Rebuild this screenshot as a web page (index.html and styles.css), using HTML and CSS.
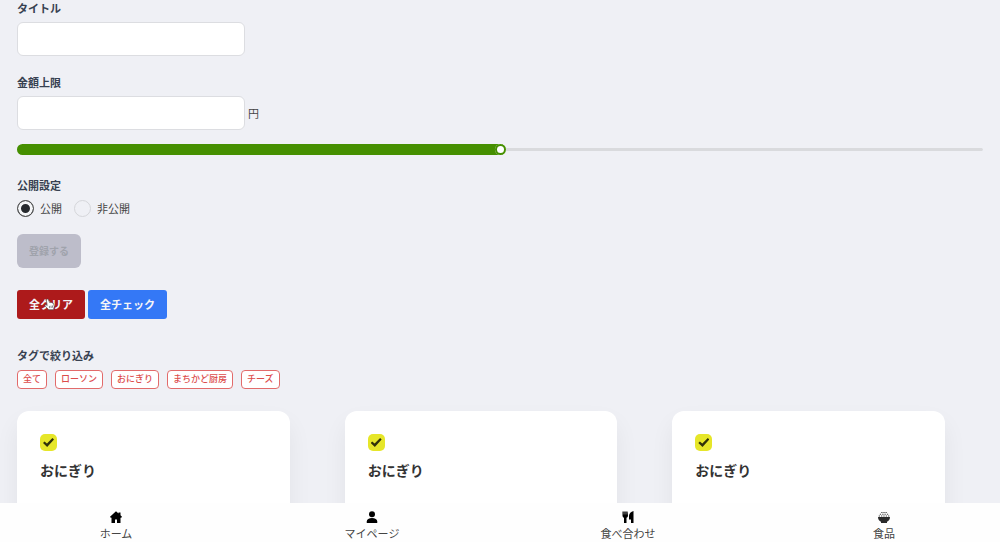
FILE: index.html
```html
<!DOCTYPE html>
<html lang="ja">
<head>
<meta charset="utf-8">
<meta name="viewport" content="width=device-width, initial-scale=1">
<title>食べ合わせ</title>
<link rel="stylesheet" href="styles.css">
</head>
<body>
<main class="page">
  <form class="form">
    <div class="field">
      <label class="label" for="title">タイトル</label>
      <input class="text-box" id="title" type="text">
    </div>
    <div class="field">
      <label class="label" for="limit">金額上限</label>
      <div class="amount">
        <input class="text-box" id="limit" type="text" inputmode="numeric">
        <span>円</span>
      </div>
    </div>
    <input class="range" type="range" min="0" max="100" value="50" aria-label="金額上限">
    <fieldset class="visibility">
      <legend class="label">公開設定</legend>
      <div class="options">
        <label class="option"><input class="radio" type="radio" name="visibility" checked>公開</label>
        <label class="option"><input class="radio" type="radio" name="visibility">非公開</label>
      </div>
    </fieldset>
    <button class="submit" type="submit" disabled>登録する</button>
  </form>

  <div class="actions">
    <button class="action action-clear" type="button">全クリア
      <svg class="pointer" viewBox="0 0 12 14" aria-hidden="true"><path d="M3.2 1.2c.8-.5 1.5 0 1.8.8l1 2.7c.6-.4 1.2-.2 1.5.3.6-.4 1.2-.2 1.5.4.7-.3 1.3 0 1.5.7l.7 3.2-.8 3.4H5.2L1.3 8.7c-.8-1 .5-1.900 1.300-1.200l.9.7L2.6 2.600c-.1-.6.1-1.100.6-1.400z"/><path class="pointer-lines" d="M5.800 8.500l.4 2.500M7.500 8.300l.4 2.500M9.100 8l.3 2.500"/></svg>
    </button>
    <button class="action action-check" type="button">全チェック</button>
  </div>

  <section class="filter">
    <h2 class="label">タグで絞り込み</h2>
    <div class="tags">
      <button class="tag" type="button">全て</button>
      <button class="tag" type="button">ローソン</button>
      <button class="tag" type="button">おにぎり</button>
      <button class="tag" type="button">まちかど厨房</button>
      <button class="tag" type="button">チーズ</button>
    </div>
  </section>

  <section class="cards">
    <article class="card">
      <input class="check" id="food-1" type="checkbox" checked>
      <label class="card-title" for="food-1">おにぎり</label>
    </article>
    <article class="card">
      <input class="check" id="food-2" type="checkbox" checked>
      <label class="card-title" for="food-2">おにぎり</label>
    </article>
    <article class="card">
      <input class="check" id="food-3" type="checkbox" checked>
      <label class="card-title" for="food-3">おにぎり</label>
    </article>
  </section>
</main>

<nav class="nav">
  <a class="nav-link" href="#home">
    <svg class="icon" viewBox="0 0 24 24" aria-hidden="true"><path d="M12 .5 0 11.500l1.500 2H3V24h7v-7h4v7h7V13.500h1.500l1.500-2-3-2.800V3h-4v2z"/></svg>
    ホーム
  </a>
  <a class="nav-link" href="#mypage">
    <svg class="icon" viewBox="0 0 24 24" aria-hidden="true"><circle cx="12" cy="6.500" r="6"/><path d="M1.500 24v-3c0-4.500 4.500-7 10.500-7s10.500 2.500 10.500 7v3z"/></svg>
    マイページ
  </a>
  <a class="nav-link" href="#pairings">
    <svg class="icon" viewBox="0 0 24 24" aria-hidden="true"><path d="M1 1h2.500v6h1V1h3v6h1V1H11l1 8c0 2.300-1.200 3.900-3 4.600V24H4V13.600C2.200 12.900 1 11.300 1 9zM23 0v24h-5v-7h-4v-7c0-5 4-9 9-10z"/></svg>
    食べ合わせ
  </a>
  <a class="nav-link" href="#foods">
    <svg class="icon" viewBox="0 0 24 24" aria-hidden="true"><path class="bowl" d="M0 12h24c0 5-2.500 8-6 9.500V24H6v-2.500C2.500 20 0 17 0 12z"/><path class="rice" d="M1.500 10h2.500M6 10h2.500M10.700 10h2.500M15.500 10H18M20 10h2.500M3.700 6.500h2.500M8.500 6.500H11M13 6.500h2.500M17.800 6.500h2.500M6.500 3H9M10.800 3h2.500M15 3h2.500"/></svg>
    食品
  </a>
</nav>
</body>
</html>
```

FILE: styles.css
```css
* {
  box-sizing: border-box;
}

body {
  margin: 0;
  background: #eff0f5;
  color: #444;
  font: 11px/16px "Noto Sans CJK JP", sans-serif;
}

button,
input {
  margin: 0;
  font: inherit;
}

.page {
  padding: 0 17px;
}

.form {
  display: flex;
  flex-direction: column;
  align-items: flex-start;
}

.field {
  display: flex;
  flex-direction: column;
  gap: 6px;
  margin-bottom: 18px;
}

.label {
  margin: 0;
  padding: 0;
  color: #374151;
  font-size: 11px;
  font-weight: 700;
}

.text-box {
  width: 228px;
  height: 34px;
  padding: 0 11px;
  border: 1px solid #dcdde1;
  border-radius: 6px;
  background: #fff;
}

.amount {
  display: flex;
  align-items: center;
  gap: 3px;
}

.range {
  width: 100%;
  height: 11px;
  margin: -4px 0 22px;
  overflow: hidden;
  border-radius: 6px;
  background: transparent;
  appearance: none;
}

.range::-webkit-slider-runnable-track {
  height: 3px;
  border-radius: 2px;
  background: #d9dadd;
}

.range::-webkit-slider-thumb {
  width: 11px;
  height: 11px;
  margin-top: -4px;
  border-radius: 50%;
  background: #fff;
  box-shadow: 0 0 0 2px #458f00 inset, -2003px 0 0 2000px #458f00;
  appearance: none;
}

.visibility {
  margin: 0 0 17px;
  padding: 0;
  border: 0;
}

.options {
  display: flex;
  gap: 12px;
  margin-top: 6px;
}

.option {
  display: flex;
  align-items: center;
  height: 18px;
  gap: 6px;
}

.radio {
  width: 17px;
  height: 17px;
  border: 1px solid #d5d6da;
  border-radius: 50%;
  appearance: none;
}

.radio:checked {
  border-color: #555;
  background: #272a2e;
  box-shadow: 0 0 0 3px #f5f6f8 inset;
}

.submit {
  height: 34px;
  padding: 0 12px;
  border: 0;
  border-radius: 6px;
  background: #bdbdca;
  color: #a0a3ac;
  font-size: 10px;
  font-weight: 700;
}

.actions {
  display: flex;
  gap: 3px;
  margin: 22px 0 28px;
}

.action {
  position: relative;
  height: 29px;
  padding: 0 12px 2px;
  border: 0;
  border-radius: 3px;
  color: #f5f5f7;
  font-weight: 700;
}

.action-clear {
  background: #ad1a1b;
}

.action-check {
  background: #3478f6;
}

.pointer {
  position: absolute;
  top: 8px;
  left: 27px;
  width: 11px;
  height: 13px;
  fill: #fff;
  stroke: #444;
  stroke-width: 0.7;
}

.pointer-lines {
  fill: none;
}

.tags {
  display: flex;
  flex-wrap: wrap;
  gap: 8px;
  margin: 7px 0 22px;
}

.tag {
  height: 19px;
  padding: 0 5px 1px;
  border: 1px solid #e26b6b;
  border-radius: 4px;
  background: #fff;
  color: #dc4c4c;
  font-size: 9px;
  font-weight: 500;
  line-height: 16px;
}

.cards {
  display: grid;
  grid-template-columns: repeat(3, 1fr);
  gap: 55px;
  padding-right: 38px;
}

.card {
  display: flex;
  flex-direction: column;
  align-items: flex-start;
  gap: 9px;
  min-height: 120px;
  padding: 23px;
  border-radius: 12px;
  background: #fff;
  box-shadow: 0 12px 24px rgb(0 0 0 / 6%);
}

.check {
  width: 17px;
  height: 17px;
  border-radius: 5px;
  background: #e6e629;
  appearance: none;
}

.check::before {
  display: block;
  width: 11px;
  height: 9px;
  margin: 4px 3px;
  background: #30320a;
  clip-path: polygon(0 55%, 14% 38%, 36% 62%, 86% 0, 100% 16%, 38% 100%);
  content: "";
}

.card-title {
  color: #333;
  font-size: 14px;
  font-weight: 700;
  line-height: 20px;
}

.nav {
  position: fixed;
  right: 0;
  bottom: 0;
  left: 0;
  display: grid;
  grid-template-columns: repeat(4, 1fr);
  gap: 24px;
  padding: 8px 0 1px;
  background: #fefefe;
}

.nav-link {
  display: flex;
  flex-direction: column;
  align-items: center;
  gap: 2px;
  color: #444;
  text-decoration: none;
}

.icon {
  width: 12px;
  height: 12px;
  fill: #000;
}

.icon .bowl {
  fill: #2b2b2b;
}

.icon .rice {
  fill: none;
  stroke: #444;
  stroke-width: 2;
}
```
